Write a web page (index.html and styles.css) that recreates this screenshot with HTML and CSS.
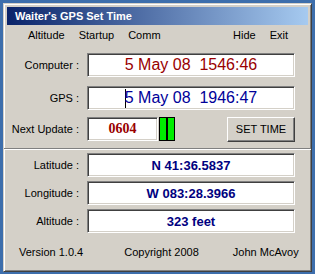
FILE: index.html
```html
<!DOCTYPE html>
<html lang="en">
<head>
    <meta charset="UTF-8">
    <meta name="viewport" content="width=device-width, initial-scale=1.0">
    <title>Waiter's GPS Set Time</title>
    <link rel="stylesheet" href="styles.css">
</head>
<body>
    <div class="window">
        <div class="titlebar">Waiter's GPS Set Time</div>
        <div class="menubar">
            <span class="menu-item">Altitude</span>
            <span class="menu-item">Startup</span>
            <span class="menu-item">Comm</span>
            <span class="menu-item push">Hide</span>
            <span class="menu-item">Exit</span>
        </div>

        <div class="row row-computer">
            <label class="label">Computer :</label>
            <div class="field field-wide time red">5 May 08&nbsp; 1546:46</div>
        </div>
        <div class="row row-gps">
            <label class="label">GPS :</label>
            <div class="field field-wide time blue"><span class="caret"></span>5 May 08&nbsp; 1946:47</div>
        </div>
        <div class="row row-next">
            <label class="label">Next Update :</label>
            <div class="field field-small countdown">0604</div>
            <div class="indicator"><span></span><span></span></div>
            <button class="set-btn">SET TIME</button>
        </div>

        <div class="separator"></div>

        <div class="row row-lat">
            <label class="label">Latitude :</label>
            <div class="field field-wide coord">N 41:36.5837</div>
        </div>
        <div class="row row-pos">
            <label class="label">Longitude :</label>
            <div class="field field-wide coord">W 083:28.3966</div>
        </div>
        <div class="row row-pos">
            <label class="label">Altitude :</label>
            <div class="field field-wide coord">323 feet</div>
        </div>

        <div class="footer">
            <span class="version">Version 1.0.4</span>
            <span class="copyright">Copyright 2008</span>
            <span class="author">John McAvoy</span>
        </div>
    </div>
</body>
</html>
```

FILE: styles.css
```css
body {
    margin: 0;
    padding: 3px;
    background: #3d6eac;
    font-family: "Liberation Sans", Arial, sans-serif;
    font-size: 11px;
    color: #000;
}
.window {
    width: 309px;
    height: 269px;
    box-sizing: border-box;
    background: #d4d0c8;
    border: 1px solid;
    border-color: #d4d0c8 #404040 #404040 #d4d0c8;
    box-shadow: inset 1px 1px #fff, inset -1px -1px #808080;
    padding: 3px;
}
.titlebar {
    height: 18px;
    line-height: 18px;
    padding-left: 8px;
    background: linear-gradient(to right, #0a246a, #a6caf0);
    color: #fff;
    font-weight: bold;
    font-size: 11px;
}
.menubar {
    display: flex;
    gap: 14px;
    height: 19px;
    line-height: 20px;
    padding: 0 20px 0 21px;
}
.menu-item.push {
    margin-left: auto;
}
.row {
    display: flex;
    align-items: center;
    height: 24px;
}
.row-computer { margin-top: 9px; }
.row-gps { margin-top: 9px; }
.row-next { margin-top: 7px; }
.row-lat { margin-top: 0; }
.row-pos { margin-top: 4px; }
.label {
    width: 72px;
    text-align: right;
    margin-right: 8px;
}
.field {
    height: 24px;
    box-sizing: border-box;
    background: #fff;
    border: 1px solid;
    border-color: #808080 #fff #fff #808080;
    box-shadow: inset 1px 1px #404040, inset -1px -1px #d4d0c8;
    display: flex;
    align-items: center;
    justify-content: center;
}
.field-wide {
    width: 208px;
}
.field-small {
    width: 71px;
}
.time {
    font-size: 16px;
    white-space: nowrap;
}
.red { color: #990000; }
.blue { color: #000099; }
.caret {
    display: inline-block;
    width: 1px;
    height: 19px;
    background: #000;
    margin-right: -1px;
}
.countdown {
    font-family: "Liberation Serif", "Times New Roman", serif;
    font-weight: bold;
    font-size: 14px;
    color: #990000;
}
.indicator {
    display: flex;
    gap: 2px;
    height: 24px;
    margin-left: 1px;
    background: #000;
    border: 1px solid #000;
    box-sizing: border-box;
}
.indicator span {
    width: 6px;
    background: #00ee00;
}
.set-btn {
    margin-left: auto;
    margin-right: 13px;
    width: 68px;
    height: 25px;
    padding: 0;
    font-family: "Liberation Sans", Arial, sans-serif;
    font-size: 11px;
    color: #000;
    background: #d4d0c8;
    border: 1px solid;
    border-color: #fff #404040 #404040 #fff;
    box-shadow: inset -1px -1px #808080;
}
.separator {
    margin: 7px -3px 3px -3px;
    height: 1px;
    background: #808080;
    border-bottom: 1px solid #fff;
}
.coord {
    font-size: 13px;
    font-weight: bold;
    color: #000080;
}
.footer {
    display: flex;
    padding-left: 12px;
    margin-top: 13px;
}
.copyright {
    margin-left: 41px;
}
.author {
    margin-left: 34px;
}
```
